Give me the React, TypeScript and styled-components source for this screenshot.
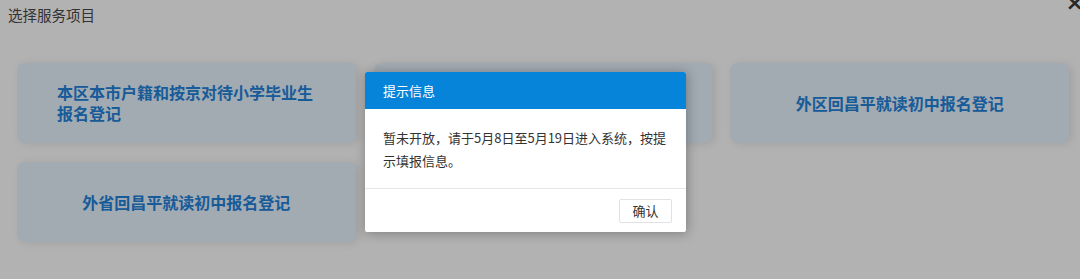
import React from "react";
import styled, { createGlobalStyle } from "styled-components";

const GlobalStyle = createGlobalStyle`
  html, body {
    margin: 0;
    padding: 0;
    background: #ffffff;
    font-family: "Noto Sans CJK SC", "Noto Sans", sans-serif;
  }
  #root {
    width: 1080px;
    height: 279px;
    overflow: hidden;
    position: relative;
  }
`;

const services = [
  "本区本市户籍和按京对待小学毕业生报名登记",
  "本区非本市户籍小学毕业生报名登记",
  "外区回昌平就读初中报名登记",
  "外省回昌平就读初中报名登记",
];

function App() {
  return (
    <>
      <GlobalStyle />
      <Page>
        <PageTitle>选择服务项目</PageTitle>
        <CloseMark>×</CloseMark>
        <ServiceGrid>
          {services.map((s) => (
            <ServiceCard key={s}>
              <CardLabel>{s}</CardLabel>
            </ServiceCard>
          ))}
        </ServiceGrid>
      </Page>
      <Mask />
      <Dialog>
        <DialogHeader>提示信息</DialogHeader>
        <DialogBody>
          暂未开放，请于5月8日至5月19日进入系统，按提示填报信息。
        </DialogBody>
        <DialogFooter>
          <ConfirmButton>确认</ConfirmButton>
        </DialogFooter>
      </Dialog>
    </>
  );
}

const Page = styled.div`
  height: 279px;
  display: flex;
  flex-direction: column;
  position: relative;
`;

const PageTitle = styled.div`
  padding: 4px 0 0 8px;
  font-size: 14.5px;
  line-height: 22px;
  color: #4a4a4a;
`;

const CloseMark = styled.div`
  position: absolute;
  top: -10px;
  right: -4px;
  font-size: 22px;
  font-weight: 700;
  color: #3a3a3a;
  font-family: "DejaVu Sans", sans-serif;
`;

const ServiceGrid = styled.div`
  margin-top: 37px;
  padding: 0 11px 0 17px;
  display: grid;
  grid-template-columns: repeat(3, 1fr);
  grid-auto-rows: 80px;
  column-gap: 18px;
  row-gap: 19px;
`;

const ServiceCard = styled.div`
  background: #e9f4ff;
  border-radius: 8px;
  box-shadow: 3px 1px 8px rgba(0, 0, 0, 0.1);
  display: flex;
  align-items: center;
  justify-content: center;
  padding: 0 40px;
`;

const CardLabel = styled.div`
  font-size: 16px;
  font-weight: 700;
  line-height: 21px;
  color: #2383dc;
  text-align: left;
`;

const Mask = styled.div`
  position: absolute;
  inset: 0;
  background: rgba(0, 0, 0, 0.3);
`;

const Dialog = styled.div`
  position: absolute;
  left: 365px;
  top: 72px;
  width: 321px;
  background: #ffffff;
  border-radius: 2px;
  box-shadow: 1px 1px 12px rgba(0, 0, 0, 0.3);
  overflow: hidden;
`;

const DialogHeader = styled.div`
  height: 37px;
  background: #0584d9;
  color: #ffffff;
  font-size: 13px;
  line-height: 37px;
  padding: 0 18px;
`;

const DialogBody = styled.div`
  padding: 17px 18px 16px;
  font-size: 13px;
  line-height: 23px;
  color: #333333;
`;

const DialogFooter = styled.div`
  border-top: 1px solid #e6e6e6;
  height: 43px;
  display: flex;
  align-items: center;
  justify-content: flex-end;
  padding: 0 14px;
`;

const ConfirmButton = styled.button`
  width: 53px;
  height: 24px;
  background: #ffffff;
  border: 1px solid #e2e2e2;
  border-radius: 2px;
  font-family: "Noto Sans CJK SC", sans-serif;
  font-size: 13px;
  color: #333333;
  padding: 0;
  cursor: pointer;
`;

export default App;
